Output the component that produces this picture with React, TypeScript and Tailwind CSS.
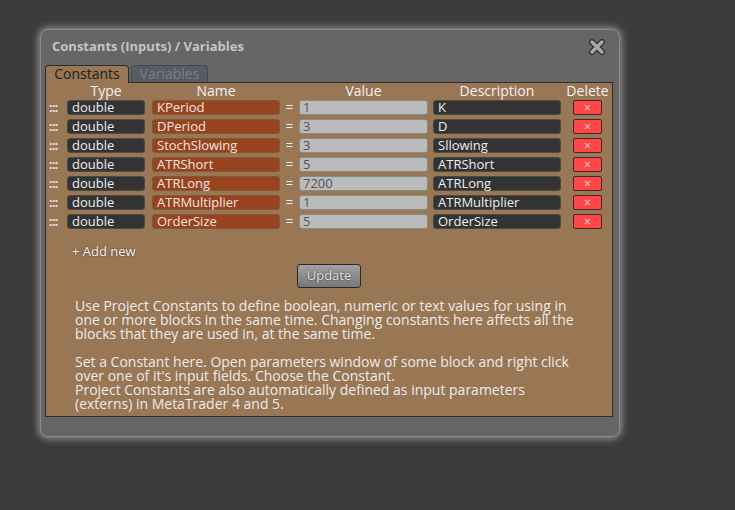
import React from 'react';

const rows = [
  { type: 'double', name: 'KPeriod', value: '1', desc: 'K' },
  { type: 'double', name: 'DPeriod', value: '3', desc: 'D' },
  { type: 'double', name: 'StochSlowing', value: '3', desc: 'Sllowing' },
  { type: 'double', name: 'ATRShort', value: '5', desc: 'ATRShort' },
  { type: 'double', name: 'ATRLong', value: '7200', desc: 'ATRLong' },
  { type: 'double', name: 'ATRMultiplier', value: '1', desc: 'ATRMultiplier' },
  { type: 'double', name: 'OrderSize', value: '5', desc: 'OrderSize' },
];

function CloseIcon() {
  return (
    <svg width="18" height="18" viewBox="0 0 18 18">
      <path d="M4 4 L14 14 M14 4 L4 14" stroke="#2e2e2e" strokeWidth="6" strokeLinecap="round" />
      <path d="M4 4 L14 14 M14 4 L4 14" stroke="#a9a9a9" strokeWidth="3.4" strokeLinecap="round" />
    </svg>
  );
}

function Row({ r }: { r: (typeof rows)[number] }) {
  return (
    <div className="flex items-center h-[15px] pl-[3px]">
      {/* drag handle */}
      <div className="w-[10px] text-[12px] leading-none text-[#e8e8e8] tracking-[-0.5px] font-bold">:::</div>
      <div className="ml-[8px] w-[78px] h-[15px] rounded-[3px] bg-[#333333] border border-[#4a4a4a] text-[#eeeeee] pl-[4px] leading-[13px]">{r.type}</div>
      <div className="ml-[7px] w-[128px] h-[15px] rounded-[3px] bg-[#98421f] border border-[#7e5a3a] text-[#f0e8e0] pl-[4px] leading-[13px]">{r.name}</div>
      <div className="w-[19px] text-center text-[#eeeeee] leading-[13px]">=</div>
      <div className="w-[129px] h-[15px] rounded-[3px] bg-[#bbbbbb] border border-[#8a8a8a] text-[#555555] pl-[3px] leading-[13px]">{r.value}</div>
      <div className="ml-[5px] w-[128px] h-[15px] rounded-[3px] bg-[#333333] border border-[#4a4a4a] text-[#eeeeee] pl-[4px] leading-[13px]">{r.desc}</div>
      <div className="ml-[12px] w-[29px] h-[15px] rounded-[2px] bg-[#ff4545] border border-[#3a2a2a] flex items-center justify-center text-[#ffe8e8] text-[12px] leading-none">×</div>
    </div>
  );
}

export default function App() {
  return (
    <div className="w-[735px] h-[510px] bg-[#3c3c3c] overflow-hidden pt-[29px] pl-[40px] text-[13px]" style={{ fontFamily: '"Open Sans", "Noto Sans", sans-serif' }}>
      <div className="w-[580px] h-[408px] rounded-[8px] bg-[#666666] border border-[#8a8a8a] shadow-[0_0_7px_2px_rgba(210,210,210,0.55)] flex flex-col">
        {/* title bar */}
        <div className="h-[34px] flex items-center justify-between pl-[11px] pr-[13px]">
          <div className="font-bold text-[13px] text-[#c4c4c4]">Constants (Inputs) / Variables</div>
          <CloseIcon />
        </div>

        {/* tabs */}
        <div className="flex items-end pl-[4px] h-[18px]">
          <div className="w-[84px] h-[18px] rounded-t-[4px] bg-[#997654] border border-b-0 border-[#2e2e2e] text-[#1c1c1c] text-[14px] leading-[16px] text-center relative z-10 -mb-px">Constants</div>
          <div className="ml-[2px] w-[77px] h-[17px] rounded-t-[4px] bg-[#585a64] border border-b-0 border-[#464850] text-[#7c7e88] text-[14px] leading-[15px] text-center">Variables</div>
        </div>

        {/* panel */}
        <div className="ml-[4px] w-[568px] h-[335px] bg-[#997654] border border-[#2e2e2e]">
          <div className="flex h-[16px] items-center pl-[3px] text-[14px] text-[#f2f2f2] leading-none">
            <div className="w-[10px]" />
            <div className="ml-[8px] w-[78px] text-center">Type</div>
            <div className="ml-[7px] w-[128px] text-center">Name</div>
            <div className="w-[19px]" />
            <div className="w-[129px] text-center">Value</div>
            <div className="ml-[5px] w-[128px] text-center">Description</div>
            <div className="ml-[12px] w-[29px] flex justify-center whitespace-nowrap">Delete</div>
          </div>
          <div className="flex flex-col gap-[4px] pt-[1px]">
            {rows.map((r) => (
              <Row key={r.name} r={r} />
            ))}
          </div>

          <div className="pl-[26px] pt-[14px] text-[#f4f4f4] [text-shadow:0_0_2px_rgba(0,0,0,0.6)] leading-[16px]">+ Add new</div>

          <div className="flex justify-center pt-[5px]">
            <button className="w-[64px] h-[24px] rounded-[3px] border border-[#2a2a2a] bg-gradient-to-b from-[#a2a2a2] to-[#787878] text-[#e4e4e4] text-[13px] [text-shadow:0_0_2px_rgba(0,0,0,0.8)]">Update</button>
          </div>

          <div className="pl-[29px] pt-[11px] text-[#ececec] text-[14px] leading-[14px] whitespace-nowrap">
            <p>Use Project Constants to define boolean, numeric or text values for using in<br />one or more blocks in the same time. Changing constants here affects all the<br />blocks that they are used in, at the same time.</p>
            <p className="mt-[14px]">Set a Constant here. Open parameters window of some block and right click<br />over one of it's input fields. Choose the Constant.<br />Project Constants are also automatically defined as input parameters<br />(externs) in MetaTrader 4 and 5.</p>
          </div>
        </div>
      </div>
    </div>
  );
}
